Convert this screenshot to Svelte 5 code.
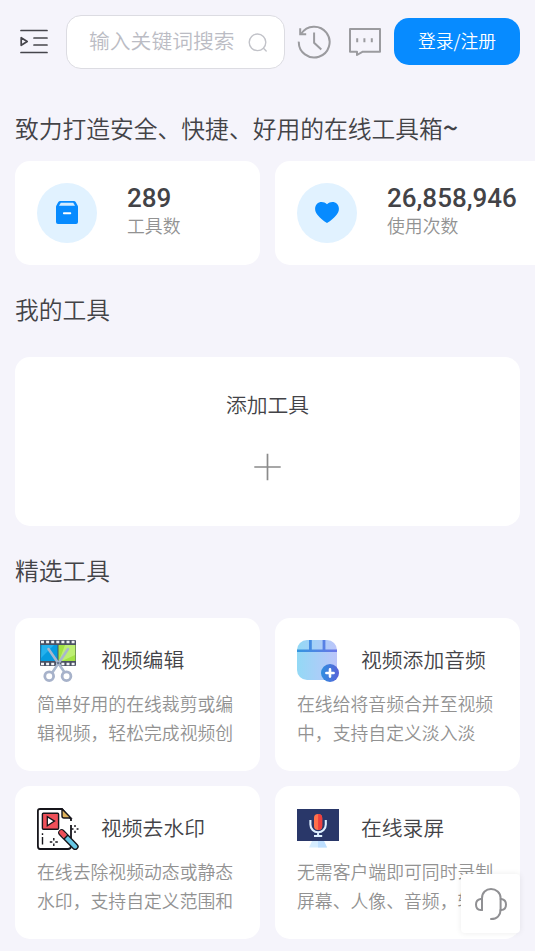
<script lang="ts">
  type Tool = { icon: string; title: string; lines: string[] };

  const stats = [
    { icon: 'box', value: '289', label: '工具数' },
    { icon: 'heart', value: '26,858,946', label: '使用次数' }
  ];

  const tools: Tool[] = [
    { icon: 'edit', title: '视频编辑', lines: ['简单好用的在线裁剪或编', '辑视频，轻松完成视频创'] },
    { icon: 'audio', title: '视频添加音频', lines: ['在线给将音频合并至视频', '中，支持自定义淡入淡'] },
    { icon: 'watermark', title: '视频去水印', lines: ['在线去除视频动态或静态', '水印，支持自定义范围和'] },
    { icon: 'record', title: '在线录屏', lines: ['无需客户端即可同时录制', '屏幕、人像、音频，轻'] }
  ];

  let keyword = $state('');
</script>

<div class="page">
  <header>
    <button class="plain menu" aria-label="菜单">
      <svg width="28" height="26" viewBox="0 0 28 26" fill="none" stroke="#45454b" stroke-width="1.7" stroke-linecap="round" stroke-linejoin="round">
        <path d="M1 1.5H27M14 9H27M14 16H27M1 23.5H27M1.2 8.7V16.3L7.2 12.5Z" />
      </svg>
    </button>
    <label class="search">
      <input type="text" placeholder="输入关键词搜索" bind:value={keyword} />
      <svg width="20" height="20" viewBox="0 0 20 20" fill="none" stroke="#c2c3c9" stroke-width="1.4" stroke-linecap="round">
        <circle cx="9.5" cy="9.3" r="8.3" />
        <path d="M15.5 15.3L18.2 18" />
      </svg>
    </label>
    <button class="plain history" aria-label="历史">
      <svg width="34" height="34" viewBox="0 0 34 34" fill="none" stroke="#9b9b9f" stroke-width="2">
        <path d="M1.8 16.6A15.4 15.4 0 1 0 4.2 8.8" />
        <path d="M3.2 3.3V9.2H9.2M17.1 7.6V17.7L24.3 24.5" />
      </svg>
    </button>
    <button class="plain message" aria-label="消息">
      <svg width="34" height="30" viewBox="0 0 34 30" fill="none" stroke="#9b9b9f" stroke-width="2">
        <path d="M2 2H32V24.7H14.8L9 28V24.7H2Z" stroke-linejoin="round" />
        <path d="M9.2 11.2V15.2M16.4 11.2V15.2M23.8 11.2V15.2" />
      </svg>
    </button>
    <button class="login">登录/注册</button>
  </header>

  <main>
    <h1>致力打造安全、快捷、好用的在线工具箱<b>~</b></h1>
    <section class="stats">
      {#each stats as stat}
        <div class="card stat">
          <span class="badge">
            {#if stat.icon === 'box'}
              <svg width="22" height="23" viewBox="0 0 22 23">
                <path d="M4.2 0H17.8Q19 0 19.7 1L22 5.2V21Q22 23 20 23H2Q0 23 0 21V5.2L2.3 1Q3 0 4.2 0Z" fill="#078bff" />
                <path d="M4.8 1.8H17.2L19 4.7H3Z" fill="#d4ecff" />
                <rect x="7" y="11.2" width="8.2" height="2" rx=".7" fill="#fff" />
              </svg>
            {:else}
              <svg width="26" height="22" viewBox="0 0 26 22">
                <path d="M13 2.3C16-.6 20.4-.7 23.1 2C25.8 4.7 25.4 9.7 22.4 13C19.8 16 17 18.9 13 21.1C9 18.9 6.2 16 3.6 13C.6 9.7.2 4.7 2.9 2C5.6-.7 10-.6 13 2.3Z" fill="#078bff" />
              </svg>
            {/if}
          </span>
          <div class="figures">
            <strong>{stat.value}</strong>
            <span>{stat.label}</span>
          </div>
        </div>
      {/each}
    </section>

    <h2>我的工具</h2>
    <button class="card add">
      <span>添加工具</span>
      <svg width="28" height="28" viewBox="0 0 28 28" fill="none" stroke="#8b8b8b" stroke-width="1.7">
        <path d="M13.5 .8V27.2M.3 14H26.7" />
      </svg>
    </button>

    <h2>精选工具</h2>
    <section class="tools">
      {#each tools as tool}
        <article class="card tool">
          <div class="tool-head">
            <svg class="tool-icon" viewBox="0 0 42 42">
              {#if tool.icon === 'edit'}
                <rect x="3" y="0" width="36" height="26" rx="1" fill="#4b5264" />
                <path d="M4 2.1H39M4 23.9H39" stroke="#f1f3f6" stroke-width="2.5" stroke-dasharray="3 2.1" />
                <rect x="3.5" y="5" width="17" height="16" fill="#079bdf" />
                <rect x="21.5" y="5" width="17" height="16" fill="#a2e344" />
                <path d="M5 5H17L4 18Z" fill="#36bdf5" opacity=".65" />
                <path d="M28 5H38V15L25 21H22Z" fill="#c9f387" opacity=".7" />
                <path d="M11.5 9L28 33M31 9L15 33" stroke="#a9b7cd" stroke-width="2.6" stroke-linecap="round" />
                <circle cx="21.2" cy="23" r="1.3" fill="#677993" />
                <g fill="#fff" stroke="#a7b2ca" stroke-width="2.8">
                  <circle cx="12.2" cy="36.2" r="4.4" />
                  <circle cx="29.5" cy="36.2" r="4.4" />
                </g>
              {:else if tool.icon === 'audio'}
                <defs>
                  <linearGradient id="calendar" x2="1" y2="0">
                    <stop stop-color="#93d9f5" />
                    <stop offset="1" stop-color="#bcc5fa" />
                  </linearGradient>
                  <linearGradient id="rail" x2="1" y2="0">
                    <stop stop-color="#3396e0" />
                    <stop offset="1" stop-color="#6975e7" />
                  </linearGradient>
                  <linearGradient id="plus" x2="1" y2="0">
                    <stop stop-color="#2f8fe0" />
                    <stop offset="1" stop-color="#5a62d8" />
                  </linearGradient>
                </defs>
                <rect width="40" height="40" rx="10" fill="url(#calendar)" />
                <path d="M0 9.4H40V12H0ZM12 0H14.8V10H12ZM25.6 0H28.4V10H25.6Z" fill="url(#rail)" />
                <circle cx="33" cy="33" r="9" fill="url(#plus)" />
                <path d="M33 29.4V36.6M29.4 33H36.6" stroke="#fff" stroke-width="2.6" stroke-linecap="round" />
              {:else if tool.icon === 'watermark'}
                <path d="M3 1H25L34 10V38Q34 41 31 41H3Q.9 41 .9 38V3Q.9 1 3 1Z" fill="#fff" />
                <path d="M34 13V11L25 1H3Q.9 1 .9 3V38Q.9 41 3 41H31Q34 41 34 38M34 17V31" fill="none" stroke="#16151b" stroke-width="1.8" />
                <path d="M25 1V8Q25 10 27 10H34Z" fill="#dfb35c" stroke="#16151b" stroke-width="1.4" />
                <rect x="5.4" y="5.2" width="16.2" height="16" rx="1" fill="#ef5059" stroke="#16151b" stroke-width="1.4" />
                <path d="M10.3 8.6V17.7L17.5 13.1Z" fill="#fff" stroke="#16151b" stroke-width="1.3" />
                <path d="M5.5 25.2V27M5.5 29V36.5M16.8 30V32.5M16.8 35.5V38M12.8 34H15.3M18.3 34H20.8M38 17V19M38 22.8V25M34.5 21H36.5M39.6 21H41.5" fill="none" stroke="#16151b" stroke-width="1.4" />
                <path d="M24.7 24.7L38.2 38.6" stroke="#16151b" stroke-width="7" stroke-linecap="round" />
                <path d="M27 27L38.2 38.6" stroke="#68c8e5" stroke-width="4.2" stroke-linecap="round" />
                <path d="M24.5 24.5L27.5 27.6" stroke="#ef5059" stroke-width="4.6" stroke-linecap="round" />
                <path d="M27 31L31 27" stroke="#16151b" stroke-width="1.4" />
              {:else}
                <path d="M15 33H27L30 39.5H12Z" fill="#d6edff" />
                <path d="M21 33H27L30 39.5H21Z" fill="#bedfff" />
                <rect y="1" width="42" height="32" fill="#293769" />
                <rect x="17" y="6" width="8.2" height="16" rx="4.1" fill="#ff704b" />
                <path d="M21.1 6A4.1 4.1 0 0 1 25.2 10V18A4.1 4.1 0 0 1 21.1 22Z" fill="#ee3f3e" />
                <path d="M13.4 12V16.5A7.7 7.7 0 0 0 28.8 16.5V12M21.1 24.3V27" fill="none" stroke="#ddefff" stroke-width="2.1" />
                <path d="M17 28H25.2" stroke="#ddefff" stroke-width="2" />
              {/if}
            </svg>
            <h3>{tool.title}</h3>
          </div>
          <p>
            {#each tool.lines as line}
              <span>{line}</span>
            {/each}
          </p>
        </article>
      {/each}
    </section>
  </main>

  <button class="plain support" aria-label="客服">
    <svg width="32" height="34" viewBox="0 0 32 34" fill="none" stroke="#909093" stroke-width="2" stroke-linecap="round">
      <path d="M7 23V11.2C7 5.5 11 2 16 2S25.6 5.5 25.6 11.2V22C25.6 28.5 21.8 32 16 32" />
      <path d="M7 12H5.7C2.6 12.5 1 14.6 1 17.5S2.6 22.8 5.7 23H7M25.6 12H26.3C29.4 12.5 31 14.6 31 17.5S29.4 22.8 26.3 23H25.6" />
    </svg>
  </button>
</div>

<style>
  :global(body) {
    margin: 0;
    background: #f5f4fb;
  }
  .page {
    position: relative;
    width: 535px;
    height: 951px;
    overflow: hidden;
    box-sizing: border-box;
    color: #434347;
    background: #f5f4fb;
    font-family: 'Noto Sans CJK SC', sans-serif;
    font-weight: 350;
  }
  button,
  input {
    padding: 0;
    border: 0;
    font: inherit;
    color: inherit;
  }
  .plain {
    background: none;
    line-height: 0;
  }
  svg {
    display: block;
    flex-shrink: 0;
  }
  header {
    display: flex;
    align-items: center;
    height: 83px;
    padding: 0 15px 0 20px;
  }
  .search {
    display: flex;
    align-items: center;
    box-sizing: border-box;
    width: 219px;
    height: 54px;
    margin-left: 18px;
    padding: 0 16px 0 22px;
    background: #fff;
    border: 1px solid #dcdce2;
    border-radius: 15px;
  }
  .search input {
    flex: 1;
    min-width: 0;
    height: 40px;
    padding-bottom: 3px;
    font-size: 20.8px;
    background: none;
    outline: none;
  }
  .search input::placeholder {
    color: #bbbcc4;
    opacity: 1;
  }
  .search svg {
    margin-top: 3px;
  }
  .history {
    margin-left: 12px;
  }
  .message {
    margin-left: 17px;
  }
  .login {
    box-sizing: border-box;
    width: 126px;
    height: 47px;
    margin-left: auto;
    padding-bottom: 3px;
    color: #fff;
    background: #078bff;
    border-radius: 15px;
    font-size: 17.8px;
    line-height: 44px;
  }
  main {
    padding: 0 15px;
  }
  h1,
  h2,
  h3,
  p {
    margin: 0;
    font-weight: inherit;
  }
  h1,
  h2 {
    font-size: 23.77px;
    white-space: nowrap;
  }
  h1 {
    height: 78px;
    line-height: 90px;
  }
  h1 b {
    font-size: 27px;
    font-weight: 500;
    line-height: 0;
  }
  h2 {
    height: 92px;
    line-height: 88px;
  }
  .card {
    box-sizing: border-box;
    background: #fff;
    border-radius: 15px;
  }
  .stats {
    display: flex;
    gap: 15px;
  }
  .stat {
    display: flex;
    align-items: center;
    gap: 30px;
    flex: 0 0 245px;
    height: 104px;
    padding: 0 22px 1px;
  }
  .stat:last-child {
    flex-basis: 275px;
  }
  .badge {
    display: flex;
    align-items: center;
    justify-content: center;
    width: 60px;
    height: 60px;
    flex-shrink: 0;
    background: #e1f2ff;
    border-radius: 50%;
  }
  .figures {
    display: flex;
    flex-direction: column;
    padding-bottom: 3px;
  }
  .figures strong {
    font-family: Roboto, sans-serif;
    font-size: 26px;
    font-weight: 500;
    line-height: 28px;
  }
  .figures span {
    color: #929292;
    font-size: 17.83px;
    line-height: 26px;
  }
  .add {
    display: flex;
    flex-direction: column;
    align-items: center;
    gap: 33px;
    width: 100%;
    height: 169px;
    padding-top: 32px;
    font-size: 20.8px;
    line-height: 31px;
  }
  .tools {
    display: grid;
    grid-template-columns: 245px 245px;
    gap: 15px;
  }
  .tool {
    height: 153px;
    padding: 22px;
  }
  .tool-head {
    display: flex;
    align-items: center;
    gap: 22px;
    height: 42px;
  }
  .tool-icon {
    width: 42px;
    height: 42px;
  }
  h3 {
    padding-bottom: 4px;
    font-size: 20.8px;
    line-height: 38px;
    white-space: nowrap;
  }
  p {
    margin-top: 6.5px;
    color: #929292;
    font-size: 17.83px;
    line-height: 29.7px;
  }
  p span {
    display: block;
    white-space: nowrap;
  }
  .support {
    position: absolute;
    right: 15px;
    bottom: 18px;
    display: flex;
    align-items: center;
    justify-content: center;
    width: 59px;
    height: 59px;
    background: #fff;
    border-radius: 4px;
    box-shadow: 0 0 6px rgba(0, 0, 0, 0.08);
  }
</style>
